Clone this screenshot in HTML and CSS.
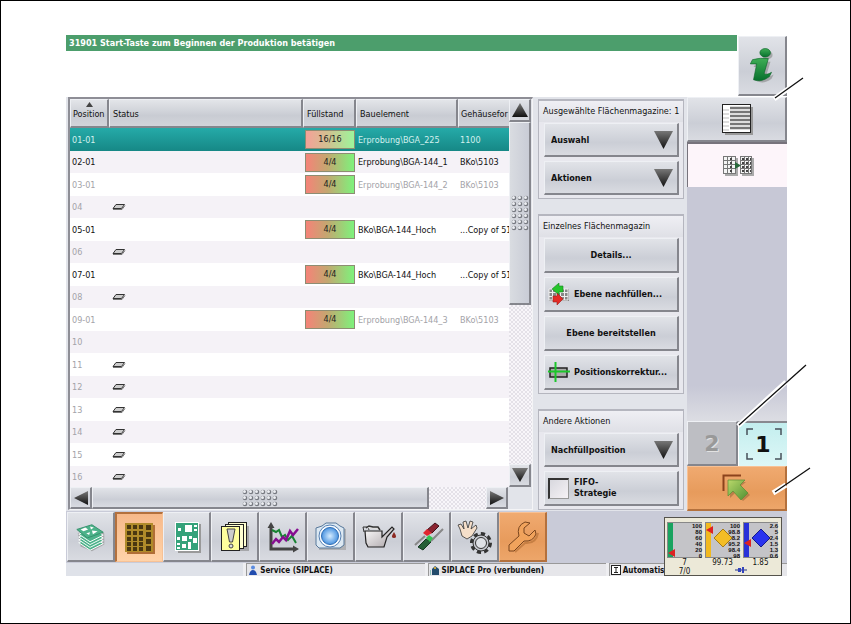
FILE: index.html
```html
<!DOCTYPE html>
<html lang="de">
<head>
    <meta charset="UTF-8">
    <meta name="viewport" content="width=device-width, initial-scale=1.0">
    <title>Flächenmagazine</title>
    <link rel="stylesheet" href="styles.css">
</head>
<body>

<!-- shared shapes -->
<svg class="defs" width="0" height="0">
    <defs>
        <linearGradient id="dark" x1="0" y1="0" x2="0" y2="1"><stop offset="0" stop-color="#777"/><stop offset="1" stop-color="#111"/></linearGradient>
        <linearGradient id="green" x1="0" y1="0" x2="0" y2="1"><stop offset="0" stop-color="#3fae56"/><stop offset="1" stop-color="#07702d"/></linearGradient>
        <linearGradient id="arrowGreen" x1="0" y1="0" x2="1" y2="1"><stop offset="0" stop-color="#b9d86a"/><stop offset="1" stop-color="#4f8f32"/></linearGradient>
        <radialGradient id="lens"><stop offset="0" stop-color="#d5ecff"/><stop offset="1" stop-color="#4a93e0"/></radialGradient>
        <linearGradient id="metal" x1="0" y1="0" x2="1" y2="1"><stop offset="0" stop-color="#fff"/><stop offset="1" stop-color="#a9a2a6"/></linearGradient>
        <pattern id="bumps" width="6" height="6" patternUnits="userSpaceOnUse">
            <circle cx="3" cy="3" r="2.300" fill="#777a82"/><circle cx="2.500" cy="2.500" r="1.500" fill="#eceef2"/>
        </pattern>
        <symbol id="tray" viewBox="0 0 14 8"><path d="M4 1.500H12.500L9.500 5.500H1z" fill="#ccc" stroke="#333"/><path d="M1 6.500H10L13 2.500" fill="none" stroke="#777"/></symbol>
    </defs>
</svg>

<div class="sheet">
<div class="app">

    <header class="top">
        <div class="message">31901 Start-Taste zum Beginnen der Produktion betätigen</div>
        <button class="info" aria-label="Info">
            <svg width="34" height="36" viewBox="3 1 26 34">
                <g fill="#888" opacity=".6" transform="translate(2 2)"><ellipse cx="19" cy="5.500" rx="5" ry="4"/><path d="M8 14Q14 11 22 12L18 25Q20 27 25 24L23 28Q15 34 9 30L12 17H6z"/></g>
                <g fill="url(#green)" stroke="#0b6427" stroke-width=".6"><ellipse cx="19" cy="5.500" rx="5" ry="4"/><path d="M7 12Q14 10 22 11L18 25Q20 27 25 24L23 28Q15 34 8 31L11 16H5z"/></g>
            </svg>
        </button>
    </header>

    <div class="main">
        <section class="list">
            <div class="table-wrap">
                <table>
                    <thead>
                        <tr><th class="c-pos"><svg class="sort" width="7" height="5"><path d="M0 5L3.500 0L7 5z" fill="#444"/></svg>Position</th><th>Status</th><th class="c-fill">Füllstand</th><th class="c-part">Bauelement</th><th class="c-form">Gehäusefor</th></tr>
                    </thead>
                    <tbody>
                        <tr class="selected"><td>01-01</td><td></td><td class="level"><span>16/16</span></td><td>Erprobung\BGA_225</td><td>1100</td></tr>
                        <tr class="ready"><td>02-01</td><td></td><td class="level"><span>4/4</span></td><td>Erprobung\BGA-144_1</td><td>BKo\5103</td></tr>
                        <tr><td>03-01</td><td></td><td class="level"><span>4/4</span></td><td>Erprobung\BGA-144_2</td><td>BKo\5103</td></tr>
                        <tr><td>04</td><td><svg width="14" height="8"><use href="#tray"/></svg></td><td></td><td></td><td></td></tr>
                        <tr class="ready"><td>05-01</td><td></td><td class="level"><span>4/4</span></td><td>BKo\BGA-144_Hoch</td><td>...Copy of 51</td></tr>
                        <tr><td>06</td><td><svg width="14" height="8"><use href="#tray"/></svg></td><td></td><td></td><td></td></tr>
                        <tr class="ready"><td>07-01</td><td></td><td class="level"><span>4/4</span></td><td>BKo\BGA-144_Hoch</td><td>...Copy of 51</td></tr>
                        <tr><td>08</td><td><svg width="14" height="8"><use href="#tray"/></svg></td><td></td><td></td><td></td></tr>
                        <tr><td>09-01</td><td></td><td class="level"><span>4/4</span></td><td>Erprobung\BGA-144_3</td><td>BKo\5103</td></tr>
                        <tr><td>10</td><td></td><td></td><td></td><td></td></tr>
                        <tr><td>11</td><td><svg width="14" height="8"><use href="#tray"/></svg></td><td></td><td></td><td></td></tr>
                        <tr><td>12</td><td><svg width="14" height="8"><use href="#tray"/></svg></td><td></td><td></td><td></td></tr>
                        <tr><td>13</td><td><svg width="14" height="8"><use href="#tray"/></svg></td><td></td><td></td><td></td></tr>
                        <tr><td>14</td><td><svg width="14" height="8"><use href="#tray"/></svg></td><td></td><td></td><td></td></tr>
                        <tr><td>15</td><td><svg width="14" height="8"><use href="#tray"/></svg></td><td></td><td></td><td></td></tr>
                        <tr><td>16</td><td><svg width="14" height="8"><use href="#tray"/></svg></td><td></td><td></td><td></td></tr>
                    </tbody>
                </table>
            </div>
            <div class="vscroll">
                <button class="sb" aria-label="Nach oben"><svg width="16" height="14"><path d="M8 0L16 14H0z" fill="url(#dark)"/></svg></button>
                <div class="thumb"><svg width="18" height="36"><rect width="18" height="36" fill="url(#bumps)"/></svg></div>
                <div class="track"></div>
                <button class="sb" aria-label="Nach unten"><svg width="16" height="14"><path d="M0 0H16L8 14z" fill="url(#dark)"/></svg></button>
            </div>
            <div class="hscroll">
                <button class="sb" aria-label="Nach links"><svg width="14" height="14"><path d="M14 0V14L0 7z" fill="url(#dark)"/></svg></button>
                <div class="thumb"><svg width="36" height="18"><rect width="36" height="18" fill="url(#bumps)"/></svg></div>
                <div class="track"></div>
                <button class="sb" aria-label="Nach rechts"><svg width="14" height="14"><path d="M0 0V14L14 7z" fill="url(#dark)"/></svg></button>
            </div>
        </section>

        <section class="controls">
            <div class="group">
                <h2>Ausgewählte Flächenmagazine: 1</h2>
                <div class="drop"><select aria-label="Auswahl"><option>Auswahl</option></select></div>
                <div class="drop"><select aria-label="Aktionen"><option>Aktionen</option></select></div>
            </div>
            <div class="group">
                <h2>Einzelnes Flächenmagazin</h2>
                <button class="btn">Details...</button>
                <button class="btn with-icon">
                    <svg width="22" height="22" viewBox="0 0 22 22">
                        <rect x="1" y="6" width="20" height="12" fill="#888"/>
                        <path d="M1 6h19v11H1zM1 9.500h19M1 13.500h19M4.500 6v11M8.500 6v11M12.500 6v11M16.500 6v11" fill="none" stroke="#eee"/>
                        <path d="M4 6L11 0V3H15V9H11V12z" fill="#25c52b" stroke="#178420" stroke-width=".6"/>
                        <path d="M15 16L9 10V13H5V19H9V22z" fill="#e32a25" stroke="#99201d" stroke-width=".6"/>
                    </svg>
                    Ebene nachfüllen...
                </button>
                <button class="btn">Ebene bereitstellen</button>
                <button class="btn with-icon">
                    <svg width="22" height="22" viewBox="0 0 22 22">
                        <rect x="2" y="7" width="17" height="9" fill="#aaa" stroke="#222" stroke-width="1.500"/>
                        <path d="M7.500 1V21M0 10.500H22" stroke="#1bc62a" stroke-width="2"/>
                    </svg>
                    Positionskorrektur...
                </button>
            </div>
            <div class="group">
                <h2>Andere Aktionen</h2>
                <div class="drop"><select aria-label="Nachfüllposition"><option>Nachfüllposition</option></select></div>
                <label class="btn fifo"><input type="checkbox"><span>FIFO-<br>Strategie</span></label>
            </div>
        </section>

        <nav class="side">
            <button class="side-btn" aria-label="Liste">
                <svg width="32" height="32" viewBox="0 0 32 32">
                    <rect x="4" y="4" width="28" height="28" fill="#999"/>
                    <rect x="1.500" y="1.500" width="28" height="28" fill="#fff" stroke="#222"/>
                    <path d="M9 5h20M9 9h20M9 13h20M9 17h20M9 21h20M9 25h20" stroke="#777" stroke-width="2.400"/>
                    <path d="M2 7h6M2 11h6M2 15h6M2 19h6M2 23h6M2 27h6" stroke="#aaa" stroke-width=".8"/>
                </svg>
            </button>
            <button class="side-btn active" aria-label="Zuordnung">
                <svg width="34" height="24" viewBox="0 0 34 24">
                    <g fill="#aaa"><rect x="4" y="4" width="13" height="18"/><rect x="21" y="4" width="12" height="18"/></g>
                    <g fill="#f4f4f4" stroke="#777"><rect x="2.500" y="2.500" width="12" height="17"/><rect x="19.500" y="2.500" width="11" height="17"/></g>
                    <path d="M6.500 3v16M10.500 3v16M23.500 3v16M27.500 3v16M3 6.500h11M3 10.500h11M3 14.500h11M20 6.500h10M20 10.500h10M20 14.500h10" stroke="#777"/>
                    <path d="M9 5h4M9 9h4M9 13h4M9 17h4M21 5h9M21 9h9M21 13h9M21 17h9" stroke="#444" stroke-width="2" stroke-dasharray="2 2"/>
                    <path d="M14 8L20 11.500L14 15z" fill="#28683a"/>
                </svg>
            </button>
            <div class="side-space"></div>
            <div class="tabs">
                <button class="tab" disabled>2</button>
                <button class="tab current">1<svg viewBox="0 0 36 32" width="36" height="32"><path d="M1 7V1H7M29 1H35V7M1 25V31H7M29 31H35V25" fill="none" stroke="#47505a" stroke-width="1.500"/></svg></button>
            </div>
            <button class="side-btn back" aria-label="Zurück">
                <svg width="32" height="30" viewBox="0 0 32 30">
                    <path d="M2.500 18V2.500H20" fill="none" stroke="#8b431c" stroke-width="2"/>
                    <path d="M9 9H25L20 13L29 22L22 28L14 20L9 25z" fill="#9c6b3b" opacity=".6"/>
                    <path d="M7 7H24L19 12L27 20L20 27L12 18L7 23z" fill="url(#arrowGreen)" stroke="#5d8c35" stroke-width=".7"/>
                </svg>
            </button>
        </nav>
    </div>

    <nav class="toolbar">
        <button class="tool" aria-label="Leiterplatten">
            <svg width="34" height="34" viewBox="0 0 36 36">
                <path d="M4 14L19 7L32 14V26L19 33L7 28z" fill="#888" opacity=".6"/>
                <g fill="#4db28a" stroke="#fff" stroke-width="1">
                    <path d="M5 24L19 18L31 25L17 32z"/><path d="M5 21L19 15L31 22L17 29z"/><path d="M5 18L19 12L31 19L17 26z"/><path d="M5 15L19 9L31 16L17 23z"/><path d="M3 10L19 5L31 13L14 19z" stroke="#35916c"/>
                </g>
                <path d="M7 10L12 8L15 10L10 12zM17 7L21 8L18 10zM19 11L25 12L20 15zM13 14L17 13L16 16z" fill="#fff"/>
            </svg>
        </button>
        <button class="tool orange pressed" aria-label="Magazine">
            <svg width="36" height="36" viewBox="0 0 36 36">
                <rect x="5" y="5" width="28" height="29" fill="#b06e36"/>
                <rect x="3" y="3" width="28" height="29" fill="#b08b2a"/>
                <g fill="#4a3710"><path d="M5 5h4v4H5zM11 5h4v4h-4zM17 5h4v4h-4zM5 11h4v4H5zM11 11h4v4h-4zM17 11h4v4h-4zM5 17h4v4H5zM11 17h4v4h-4zM17 17h4v4h-4zM5 22h4v4H5zM11 22h4v4h-4zM17 22h4v4h-4zM5 27h4v4H5zM11 27h4v4h-4zM17 27h4v4h-4zM24 5h5v5h-5zM24 12h5v5h-5zM24 19h5v5h-5zM24 26h5v5h-5z"/></g>
            </svg>
        </button>
        <button class="tool" aria-label="Bestückung">
            <svg width="36" height="36" viewBox="0 0 36 36">
                <rect x="9" y="5" width="23" height="29" fill="#999"/>
                <rect x="6.500" y="3.500" width="23" height="28" fill="#35a27a" stroke="#fff"/>
                <path d="M9 9h3v3H9zM16 6h7v7h-7zM25 6h3v2h-3zM25 10h3v2h-3zM8 18h3v3H8zM13 17h5v5h-5zM20 17h3v3h-3zM24 19h4v5h-4zM8 24h3v2H8zM8 28h3v2H8zM13 25h4v4h-4zM19 23h3v7h-3z" fill="#fff"/>
            </svg>
        </button>
        <button class="tool" aria-label="Meldungen">
            <svg width="36" height="36" viewBox="0 0 36 36">
                <path d="M12 7H32V32H8z" fill="#888" opacity=".6"/>
                <g fill="#ffffd0" stroke="#222"><rect x="11.500" y="3.500" width="18" height="24"/><rect x="8.500" y="5.500" width="18" height="24"/><rect x="4.500" y="7.500" width="18" height="24" fill="#ffff9d"/></g>
                <path d="M10 10H18L15.500 23H12.500z" fill="#ccc" stroke="#444"/><circle cx="14" cy="27" r="2" fill="#ddd" stroke="#444"/>
            </svg>
        </button>
        <button class="tool" aria-label="Statistik">
            <svg width="36" height="36" viewBox="0 0 36 36">
                <path d="M6 8V30H30" fill="none" stroke="#444" stroke-width="3"/><path d="M2.500 9L6 3L9.500 9zM28 26.500L34 30L28 33.500z" fill="#444"/>
                <path d="M7 11L11 13L14 11L17 18L20 16L23 21L27 17L31 24" fill="none" stroke="#188332" stroke-width="2"/>
                <path d="M7 25L11 20L14 23L18 18L21 21L25 12L28 16L33 10" fill="none" stroke="#860e90" stroke-width="2.500"/>
            </svg>
        </button>
        <button class="tool" aria-label="Kamera">
            <svg width="36" height="36" viewBox="0 0 36 36">
                <path d="M6 10H33V31H6z" fill="#999" opacity=".6"/>
                <path d="M3 9L9 7L13 4H23L27 7L31 9V26L27 29H6L3 26z" fill="#dce8f2" stroke="#58789a"/>
                <circle cx="17" cy="17" r="11" fill="#f7fbff" stroke="#5680b2"/><circle cx="17" cy="17" r="8.500" fill="url(#lens)" stroke="#2f6db4"/>
            </svg>
        </button>
        <button class="tool" aria-label="Wartung">
            <svg width="36" height="36" viewBox="0 0 36 36">
                <path d="M3 13L2 8H7L8 11" fill="none" stroke="#333"/><path d="M5 9L8 7L12 8H17L19 11" fill="#ddd" stroke="#333" stroke-width="1.500"/>
                <path d="M4 12H21V18L31 8L33 10L26 18L23 28H7L5 24z" fill="url(#metal)" stroke="#222" stroke-width="1.200"/>
                <path d="M33 13Q37 19 33 19Q29 19 33 13z" fill="#8c2922"/>
            </svg>
        </button>
        <button class="tool" aria-label="Einstellungen">
            <svg width="36" height="36" viewBox="0 0 36 36">
                <path d="M6 26L16 17M22 22L34 10" stroke="#888" stroke-width="2"/>
                <path d="M18 11L26 4L30 7L23 14z" fill="#8b2431" stroke="#421219"/><path d="M14 14L18 10L23 14L18 17z" fill="#e22630"/>
                <path d="M9 28L17 20L22 23L14 31z" fill="#245f36" stroke="#173821"/><path d="M17 19L20 16L24 19L21 23z" fill="#35c352"/>
            </svg>
        </button>
        <button class="tool" aria-label="Handbetrieb">
            <svg width="36" height="36" viewBox="0 0 36 36">
                <path d="M5 17L3 10L1 6L4 5L7 10L6 3L9 2L11 9L13 2L16 3L14 10L19 6L20 9L15 17L10 20z" fill="#f5dfca" stroke="#333" stroke-width=".8"/>
                <circle cx="24" cy="24" r="9" fill="none" stroke="#333" stroke-width="4" stroke-dasharray="4 3"/>
                <circle cx="24" cy="24" r="8" fill="#c6c8cf" stroke="#333"/><circle cx="24" cy="24" r="5.500" fill="#dfe1e6" stroke="#333"/>
            </svg>
        </button>
        <button class="tool orange" aria-label="Service">
            <svg width="36" height="36" viewBox="0 0 36 36">
                <path d="M10 33L20 24Q31 25 33 14" fill="none" stroke="#96551e" stroke-width="2" opacity=".4"/>
                <path d="M4 26L14 17Q11 7 20 3L25 4L19 9V14L24 17L30 11L31 15Q28 23 19 22L9 32H4z" fill="#f1a35c" stroke="#79451e"/>
            </svg>
        </button>
    </nav>

    <footer class="status">
        <div class="field first"></div>
        <div class="field"><svg width="10" height="10" viewBox="0 0 10 10"><circle cx="5" cy="2.500" r="2" fill="#5a8be0"/><path d="M1 10Q2 5 5 5T9 10z" fill="#214cae"/></svg>Service (SIPLACE)</div>
        <div class="field"><svg width="10" height="10" viewBox="0 0 10 10"><path d="M2 10V4L5 1L9 4V10z" fill="#234b6c"/><path d="M4 4V2h2v2" fill="#c8a43c"/><path d="M0 5v5" stroke="#398"/></svg>SIPLACE Pro (verbunden)</div>
        <div class="field"><svg width="10" height="10" viewBox="0 0 10 10"><rect x=".5" y=".5" width="9" height="9" fill="#fff" stroke="#222"/><path d="M3 2.500h4M5 2.500v5M3 7.500h4" stroke="#222"/></svg>Automatis</div>
    </footer>

    <!-- floating performance monitor -->
    <aside class="monitor">
        <div class="gauge green">
            <div class="dial"><i></i><svg class="mark" width="7" height="8"><path d="M7 0V8L0 4z" fill="#d22"/></svg><span>100<br>80<br>60<br>40<br>20<br>0</span></div>
            <b>7</b><b>7/0</b>
        </div>
        <div class="gauge yellow">
            <div class="dial"><i></i><svg class="mark" width="7" height="8"><path d="M7 0V8L0 4z" fill="#d22"/></svg><span>100<br>98.8<br>98.2<br>95.2<br>98.4<br>98</span><svg class="gem" width="20" height="20"><path d="M10 1L19 10L10 19L1 10z" fill="#f3bd25" stroke="#a57b14"/></svg></div>
            <b>99.73</b>
        </div>
        <div class="gauge blue">
            <div class="dial"><i></i><svg class="mark" width="7" height="8"><path d="M7 0V8L0 4z" fill="#d22"/></svg><span>2.6<br>5<br>2.4<br>1.5<br>1.3<br>0.6</span><svg class="gem" width="20" height="20"><path d="M10 1L19 10L10 19L1 10z" fill="#2933ef" stroke="#151b8a"/></svg></div>
            <b>1.85</b>
        </div>
        <svg class="plug" width="12" height="6"><path d="M0 3H12" stroke="#238"/><path d="M3 1h3v4H3zM7 0h2v6H7z" fill="#34b"/></svg>
    </aside>

    <!-- callout lines reaching out of the screen -->
    <svg class="callouts" width="80" height="480" viewBox="0 0 80 480">
        <g stroke="#fff" stroke-width="5"><path d="M5 64L19 54M4 458L17 450M-31 391L17 347"/></g>
        <g stroke="#111" stroke-width="1.300"><path d="M6 63L34 43M6 457L41 433M-30 390L37 330"/></g>
    </svg>
</div>
</div>

</body>
</html>
```
FILE: styles.css
```css
* {
    box-sizing: border-box;
}

body {
    margin: 0;
    background: #fff;
    font-family: "DejaVu Sans Condensed", "DejaVu Sans", sans-serif;
    font-size: 9px;
    color: #111;
}

button, select, label {
    font-family: inherit;
    font-size: 9px;
    font-weight: bold;
    color: #111;
    padding: 0;
    border-radius: 0;
}

svg {
    display: block;
    flex: none;
}

.defs {
    position: absolute;
}

.sheet {
    min-height: 100vh;
    border: 1px solid #000;
    padding: 34px 63px 47px 65px;
}

.app {
    position: relative;
}

/* raised metal surface shared by all buttons */
.btn, .drop select, .info, .side-btn, .tool, .sb, .thumb, .tab {
    border: solid;
    border-width: 1px 2px 2px 1px;
    border-color: #eef0f4 #85868d #85868d #eef0f4;
    background: linear-gradient(#e1e3e8, #cbced6 60%, #d9dbe1);
}

/* message line */
.top {
    display: flex;
    height: 62px;
}

.message {
    flex: 1;
    height: 16px;
    padding-left: 3px;
    margin-right: 1px;
    background: #4c9e6c;
    color: #fff;
    font-weight: bold;
    line-height: 17px;
}

.info {
    width: 49px;
    height: 60px;
    margin-top: 1px;
    display: flex;
    align-items: center;
    justify-content: center;
}

.main {
    display: flex;
    background: #e2e4ea;
}

/* magazine list */
.list {
    flex: 1;
    min-width: 0;
    margin: 0 5px 1px 2px;
    border: 2px solid #8e8e96;
    border-right: 1px solid #f4f4f6;
    border-bottom: 1px solid #f4f4f6;
    display: grid;
    grid-template-columns: 1fr 23px;
    grid-template-rows: 388px 22px;
}

.table-wrap {
    overflow: hidden;
    background: #fff;
}

table {
    width: 100%;
    table-layout: fixed;
    border-collapse: separate;
    border-spacing: 0;
}

.c-pos { width: 39px; }
.c-fill { width: 53px; }
.c-part { width: 102px; }
.c-form { width: 51px; }

th {
    height: 29px;
    padding: 2px 0 0 3px;
    text-align: left;
    font-weight: normal;
    overflow: hidden;
    white-space: nowrap;
    background: linear-gradient(#e3e5e9, #c9ccd3 60%, #d2d4da);
    border: solid;
    border-width: 1px 2px 2px 1px;
    border-color: #eef0f4 #85868d #85868d #eef0f4;
    position: relative;
}

th.c-pos, th.c-form {
    padding-left: 2px;
}

th.c-form {
    border-right: 0;
}

.sort {
    position: absolute;
    top: 2px;
    left: 15px;
}

td {
    height: 22px;
    padding: 0 0 0 2px;
    color: #a3a3a8;
    white-space: nowrap;
    overflow: hidden;
}

td svg {
    margin-left: 1px;
}

tbody tr:nth-child(odd) td {
    height: 23px;
}

tbody tr:nth-child(even) {
    background: #f5f2f7;
}

.ready td {
    color: #111;
}

.selected {
    background: linear-gradient(#25aaa8, #168886);
}

.selected td {
    color: #d2f0ee;
}

.level span {
    display: block;
    width: 50px;
    height: 19px;
    border: 1px solid #8d8d72;
    background: linear-gradient(90deg, #f58378, #c3a870 45%, #7ef27c);
    color: #222;
    line-height: 17px;
    text-align: center;
}

.selected .level span {
    background: linear-gradient(90deg, #f5a198, #d2c090 45%, #9df59b);
}

/* scroll bars */
.vscroll {
    display: flex;
    flex-direction: column;
}

.hscroll {
    display: flex;
    margin-right: 1px;
}

.sb {
    flex: none;
    width: 22px;
    height: 22px;
    display: flex;
    align-items: center;
    justify-content: center;
}

.vscroll .sb {
    height: 23px;
}

.thumb {
    display: flex;
    align-items: center;
    justify-content: center;
}

.vscroll .thumb {
    width: 22px;
    flex: 182;
    background: linear-gradient(90deg, #d9dce1, #c9ccd6);
}

.hscroll .thumb {
    flex: 337;
}

.track {
    background: #f2eff4 repeating-conic-gradient(#e4e1e8 0 25%, #f8f6fa 0 50%) 0 0 / 4px 4px;
}

.vscroll .track {
    flex: 160;
}

.hscroll .track {
    flex: 58;
}

/* action groups */
.controls {
    flex: none;
    width: 146px;
    margin: 2px 3px 0 0;
    display: flex;
    flex-direction: column;
    gap: 15px;
}

.group {
    border: 1px solid #b5b6bf;
    border-top-width: 2px;
    padding: 0 4px 3px 5px;
    background: #e8e8ee;
    display: flex;
    flex-direction: column;
    gap: 4px;
}

.group h2 {
    margin: 0 -4px -3px -5px;
    padding-left: 4px;
    height: 21px;
    line-height: 20px;
    font-size: 9px;
    font-weight: normal;
    white-space: nowrap;
    background: linear-gradient(#efeff4, #dfe0e6);
}

.drop select {
    width: 100%;
    height: 34px;
}

.btn {
    width: 100%;
    height: 35px;
    white-space: nowrap;
    display: flex;
    align-items: center;
    justify-content: center;
}

.with-icon {
    justify-content: flex-start;
    padding-left: 3px;
    gap: 4px;
}

.drop {
    position: relative;
}

.drop select {
    display: block;
    appearance: none;
    padding-left: 6px;
}

.drop::after {
    content: "";
    position: absolute;
    right: 6px;
    top: 8px;
    width: 19px;
    height: 18px;
    background: linear-gradient(#777, #111);
    clip-path: polygon(0 0, 100% 0, 50% 100%);
    pointer-events: none;
}

.fifo {
    justify-content: flex-start;
    padding-left: 3px;
    gap: 5px;
    line-height: 11px;
}

.fifo input {
    appearance: none;
    width: 21px;
    height: 21px;
    margin: 0;
    border: solid;
    border-width: 2px 1px 1px 2px;
    border-color: #333 #999 #999 #333;
    background: linear-gradient(135deg, #d8d8de, #f6f2f6);
}

/* right column */
.side {
    flex: none;
    width: 100px;
    display: flex;
    flex-direction: column;
    background: #c7c8d6;
}

.side-btn {
    height: 45px;
    flex: none;
    display: flex;
    align-items: center;
    justify-content: center;
}

.side-btn.active {
    background: #fdf5fa;
    border-width: 2px 0 0 1px;
    border-color: #77737c;
}

.side-space {
    flex: 1;
    background: linear-gradient(transparent 85%, #dcdde3);
}

.tabs {
    display: flex;
    height: 45px;
}

.tab {
    flex: 1;
    display: flex;
    align-items: center;
    justify-content: center;
    font-family: "DejaVu Sans", sans-serif;
    font-size: 22px;
}

.tab:disabled {
    background: #bdbec3;
    color: #999;
    text-shadow: 1px 1px #e2e2e2;
}

.tab.current {
    position: relative;
    background: linear-gradient(#c3eeee, #ddf7f7);
    border-width: 2px 0 0 1px;
    border-color: #88898f #fff #fff #fff;
}

.tab svg {
    position: absolute;
    left: 7px;
    top: 5px;
}

.side-btn.back, .tool.orange {
    background: linear-gradient(#f0aa70, #e79b5c 60%, #eda66a);
    border-color: #f7c195 #b4713d #b4713d #f7c195;
}

/* bottom toolbar */
.toolbar {
    display: flex;
    height: 52px;
    padding: 1px 0 1px 1px;
    background: #c9cbd8;
}

.tool {
    width: 48px;
    height: 50px;
    display: flex;
    align-items: center;
    justify-content: center;
}

.tool.orange.pressed {
    background: linear-gradient(#f7b98a, #ffd3a9);
    border-width: 2px 1px 1px 2px;
    border-color: #b4713d #f7c195 #f7c195 #b4713d;
}

/* status line */
.status {
    display: flex;
    gap: 3px;
    height: 13px;
    background: #eeeef1;
}

.field {
    flex: 177;
    display: flex;
    align-items: center;
    gap: 2px;
    padding-left: 1px;
    white-space: nowrap;
    font-size: 8px;
    font-weight: bold;
    background: #e6e6ea;
    border-top: 1px solid #999;
    border-left: 1px solid #999;
}

.field.first {
    border: 0;
    background: #dfe2e9;
}

/* performance monitor */
.monitor {
    position: absolute;
    right: 5px;
    bottom: 0;
    width: 118px;
    height: 59px;
    padding: 4px 3px 0 2px;
    display: flex;
    gap: 3px;
    border: 1px solid #55534c;
    background: #ece9d8;
}

.gauge {
    flex: 1;
}

.gauge b {
    display: block;
    font-size: 8px;
    line-height: 9px;
    font-weight: normal;
    text-align: center;
}

.dial {
    position: relative;
    height: 36px;
    background: #c4c4c8;
    border: 1px solid #888;
    border-right: 0;
    display: flex;
    justify-content: space-between;
}

.dial i {
    width: 5px;
    background: #19a35f;
}

.yellow .dial i {
    background: #f1b91f;
}

.blue .dial i {
    background: #2933d8;
}

.dial span {
    font-family: "Liberation Sans", Arial, sans-serif;
    font-size: 6px;
    font-weight: bold;
    line-height: 6px;
    text-align: right;
}

.mark {
    position: absolute;
    left: 0;
    bottom: 0;
}

.yellow .mark {
    bottom: 23px;
}

.blue .mark {
    bottom: 10px;
}

.gem {
    position: absolute;
    left: 7px;
    top: 5px;
}

.plug {
    position: absolute;
    left: 70px;
    bottom: 2px;
}

.callouts {
    position: absolute;
    top: 0;
    right: -62px;
    overflow: visible;
    pointer-events: none;
}
```
